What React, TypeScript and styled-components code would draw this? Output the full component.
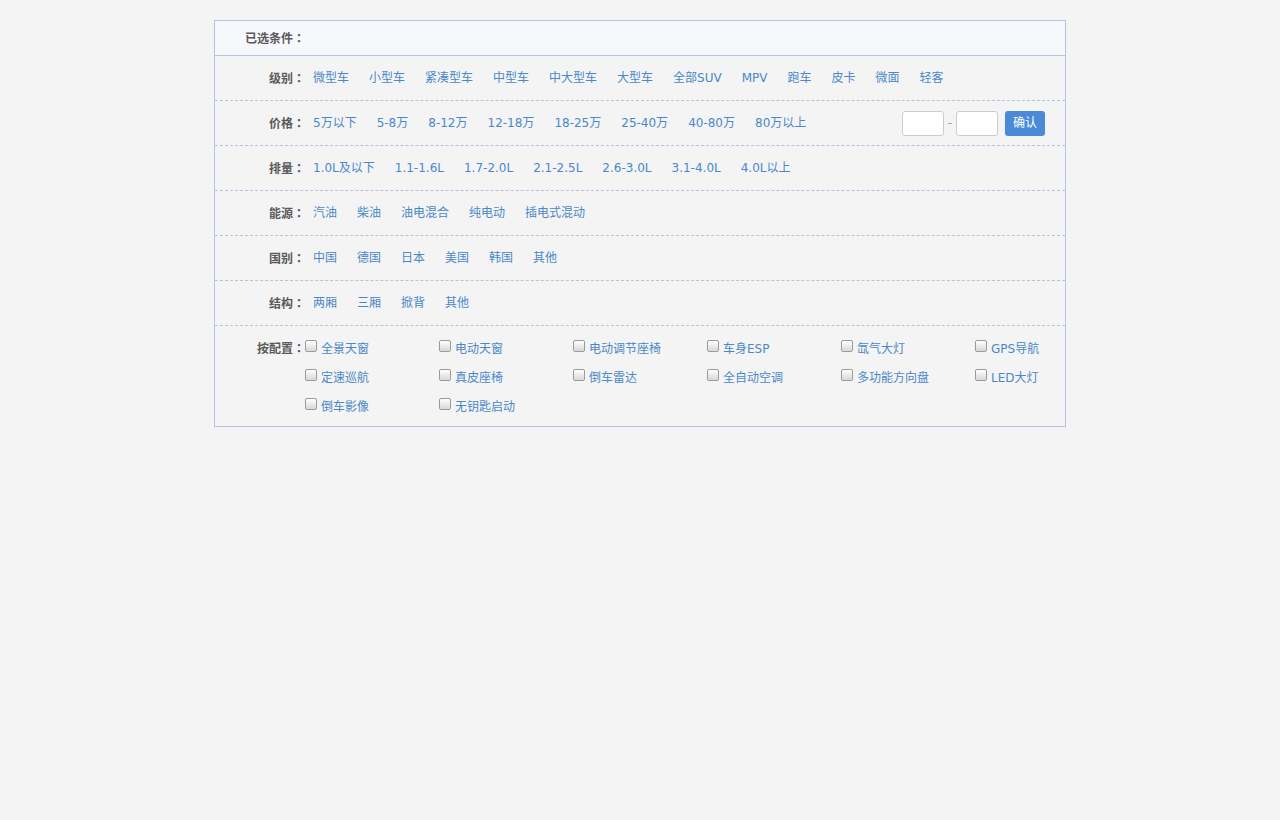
import styled, { createGlobalStyle } from 'styled-components';

const GlobalStyle = createGlobalStyle`
  html, body {
    margin: 0;
    padding: 0;
    background: #f4f4f4;
    font-family: "DejaVu Sans", "Noto Sans CJK SC", sans-serif;
    font-size: 12px;
  }
`;

const filters: { label: string; items: string[]; custom?: boolean }[] = [
  { label: '级别', items: ['微型车', '小型车', '紧凑型车', '中型车', '中大型车', '大型车', '全部SUV', 'MPV', '跑车', '皮卡', '微面', '轻客'] },
  { label: '价格', items: ['5万以下', '5-8万', '8-12万', '12-18万', '18-25万', '25-40万', '40-80万', '80万以上'], custom: true },
  { label: '排量', items: ['1.0L及以下', '1.1-1.6L', '1.7-2.0L', '2.1-2.5L', '2.6-3.0L', '3.1-4.0L', '4.0L以上'] },
  { label: '能源', items: ['汽油', '柴油', '油电混合', '纯电动', '插电式混动'] },
  { label: '国别', items: ['中国', '德国', '日本', '美国', '韩国', '其他'] },
  { label: '结构', items: ['两厢', '三厢', '掀背', '其他'] },
];

const options = [
  '全景天窗', '电动天窗', '电动调节座椅', '车身ESP', '氙气大灯', 'GPS导航',
  '定速巡航', '真皮座椅', '倒车雷达', '全自动空调', '多功能方向盘', 'LED大灯',
  '倒车影像', '无钥匙启动',
];

const App = () => (
  <>
    <GlobalStyle />
    <Page>
      <Panel>
        <Header>
          <Label>已选条件<Colon>：</Colon></Label>
        </Header>
        {filters.map((f) => (
          <Row key={f.label}>
            <Label>{f.label}<Colon>：</Colon></Label>
            <Items>
              {f.items.map((it) => (
                <Link key={it}>{it}</Link>
              ))}
            </Items>
            {f.custom && (
              <Range>
                <RangeInput />
                <Dash>-</Dash>
                <RangeInput />
                <Confirm>确认</Confirm>
              </Range>
            )}
          </Row>
        ))}
        <ConfigRow>
          <ConfigLabel>按配置<Colon>：</Colon></ConfigLabel>
          <OptionGrid>
            {options.map((o) => (
              <Option key={o}>
                <Box />
                <Link>{o}</Link>
              </Option>
            ))}
          </OptionGrid>
        </ConfigRow>
      </Panel>
    </Page>
  </>
);

const Page = styled.div`
  padding-top: 20px;
  display: flex;
  justify-content: center;
`;

const Panel = styled.div`
  width: 850px;
  border: 1px solid #b4c3e4;
  background: #f4f4f4;
`;

const Header = styled.div`
  display: flex;
  height: 34px;
  align-items: center;
  background: #f7f8fc;
  border-bottom: 1px solid #b4c3e4;
`;

const Label = styled.div`
  width: 90px;
  flex-shrink: 0;
  text-align: right;
  font-family: "Noto Sans CJK SC", sans-serif;
  font-weight: bold;
  color: #5a5a5a;
  margin-top: -2px;
`;

const Colon = styled.span`
  font-family: "Noto Sans CJK TC", sans-serif;
`;

const Row = styled.div`
  display: flex;
  align-items: center;
  height: 44px;
  border-bottom: 1px dashed #b4c3e4;
  padding-right: 20px;
`;

const Items = styled.div`
  flex: 1;
  padding-left: 8px;
  line-height: 44px;
  white-space: nowrap;

  span {
    margin-right: 20px;
  }
`;

const Link = styled.span`
  color: #4a88c8;
  white-space: nowrap;
`;

const Range = styled.div`
  display: flex;
  align-items: center;
`;

const RangeInput = styled.div`
  width: 40px;
  height: 23px;
  border: 1px solid #ccc;
  border-radius: 3px;
  background: #fff;
`;

const Dash = styled.span`
  color: #999;
  width: 12px;
  text-align: center;
`;

const Confirm = styled.div`
  margin-left: 7px;
  width: 40px;
  height: 25px;
  line-height: 25px;
  text-align: center;
  background: #4a8ad8;
  color: #fff;
  border-radius: 3px;
`;

const ConfigRow = styled.div`
  display: flex;
  align-items: flex-start;
  padding: 7px 0 6px;
`;

const ConfigLabel = styled(Label)`
  line-height: 29px;
  margin-top: 0;
`;

const OptionGrid = styled.div`
  display: grid;
  grid-template-columns: repeat(6, 134px);
  grid-auto-rows: 29px;
`;

const Option = styled.div`
  display: flex;
  align-items: center;
`;

const Box = styled.span`
  width: 10px;
  height: 10px;
  margin-right: 4px;
  margin-top: -4px;
  border: 1px solid #9a9a9a;
  border-radius: 2px;
  background: linear-gradient(#ffffff, #d6d6d6);
  box-shadow: inset 0 0 1px #fff;
`;

export default App;
